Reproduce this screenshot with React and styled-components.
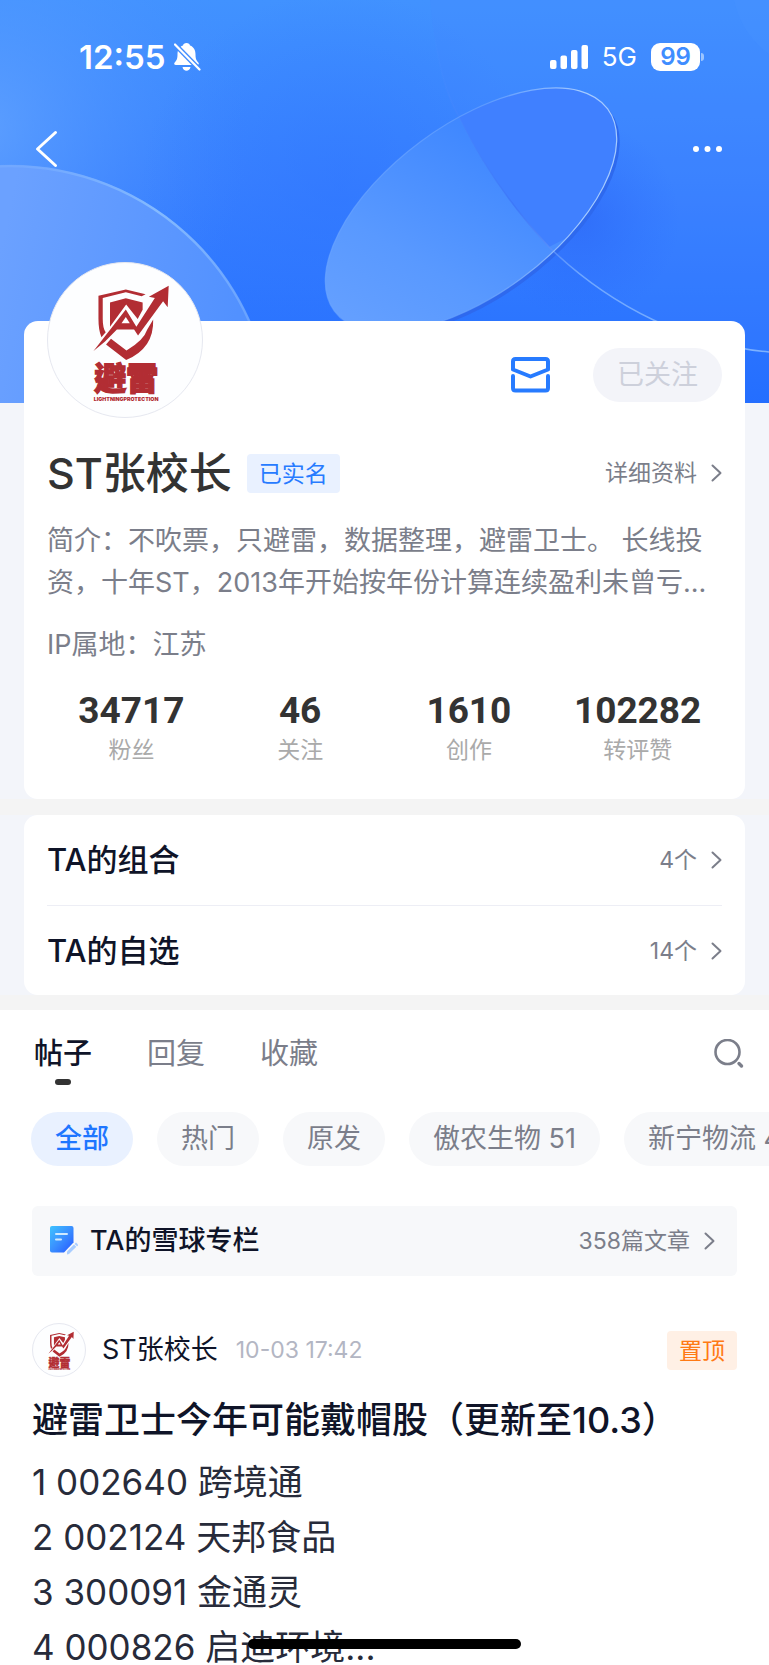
import React from "react";
import styled, { createGlobalStyle } from "styled-components";

const GlobalStyle = createGlobalStyle`
  * { box-sizing: border-box; }
  html, body { margin: 0; background: #f3f5fa; }
  body, button {
    font-family: Inter, "Noto Sans CJK SC", sans-serif;
    font-weight: 400;
  }
  h1, h2, h3, p, ul, ol, dl, dd, dt { margin: 0; padding: 0; }
  ul, ol { list-style: none; }
  button { border: 0; background: none; padding: 0; cursor: pointer; color: inherit; }
  a { color: inherit; text-decoration: none; }
  svg { display: block; flex: none; }
`;

const Shell = styled.div`
  position: relative;
  height: 100vh;
  overflow: hidden;
`;

const Scroller = styled.main`
  height: 100%;
  overflow-y: auto;
  scrollbar-width: none;
`;

const Hero = styled.header`
  position: relative;
  height: 403px;
  padding-top: 32px;
  color: #fff;
`;

const HeroArt = styled.svg`
  position: absolute;
  inset: 0;
  width: 100%;
  height: 100%;
`;

const StatusBar = styled.div`
  position: relative;
  display: flex;
  justify-content: space-between;
  align-items: center;
  height: 50px;
  padding: 0 65px 0 79px;
`;

const StatusGroup = styled.div`
  display: flex;
  align-items: center;
  gap: ${(p) => p.$gap}px;
`;

const Clock = styled.span`
  font-size: 33px;
  font-weight: 600;
  line-height: 50px;
`;

const Network = styled.span`
  font-size: 26px;
  line-height: 50px;
`;

const Battery = styled.span`
  display: flex;
  align-items: center;
  gap: 1px;
`;

const BatteryLevel = styled.span`
  width: 49px;
  height: 28px;
  border-radius: 9px;
  background: #fff;
  color: #3f8dff;
  font-size: 24px;
  font-weight: 600;
  line-height: 28px;
  text-align: center;
`;

const BatteryTip = styled.span`
  width: 3px;
  height: 8px;
  border-radius: 0 3px 3px 0;
  background: #9cc5ff;
`;

const NavBar = styled.nav`
  position: relative;
  display: flex;
  justify-content: space-between;
  align-items: center;
  height: 60px;
  margin-top: 37px;
  padding: 0 46px 0 34px;
`;

const CardArea = styled.div`
  padding: 0 24px;
  margin-top: ${(p) => (p.$overlap ? "-82px" : "0")};
  position: relative;
`;

const Card = styled.section`
  background: #fff;
  border-radius: 14px;
  padding: 0 23px;
`;

const Band = styled.div`
  height: ${(p) => p.$size}px;
  background: #f4f4f4;
`;

const ProfileTop = styled.div`
  display: flex;
  align-items: center;
  gap: 43px;
  height: 108px;
`;

const Avatar = styled.span`
  flex: none;
  width: ${(p) => p.$size}px;
  height: ${(p) => p.$size}px;
  border: 1px solid #e6e8f0;
  border-radius: 50%;
  overflow: hidden;
  background: #fdfeff;
  svg { width: 100%; height: 100%; }
`;

const AvatarSlot = styled.div`
  align-self: flex-end;
  margin: 0 auto 11px 0;
`;

const FollowButton = styled.button`
  width: 129px;
  height: 54px;
  border-radius: 27px;
  background: #f3f4f9;
  color: #cdd0db;
  font-size: 27px;
  line-height: 54px;
`;

const NameRow = styled.div`
  display: flex;
  align-items: center;
  height: 60px;
  margin-top: 14px;
`;

const Name = styled.h1`
  font-size: 43px;
  font-weight: 500;
  line-height: 60px;
  color: #333;
`;

const Tag = styled.span`
  height: 39px;
  padding: 0 12px;
  border-radius: 4px;
  font-size: 23px;
  line-height: 40px;
  background: ${(p) => (p.$tone === "orange" ? "#fff0e5" : "#e9f1ff")};
  color: ${(p) => (p.$tone === "orange" ? "#ff7a14" : "#277bff")};
`;

const NameTag = styled(Tag)`
  margin-left: 15px;
`;

const MoreLink = styled.a`
  display: flex;
  align-items: center;
  gap: 14px;
  margin-left: auto;
  font-size: 23px;
  line-height: 40px;
  color: #7b7e8a;
`;

const Bio = styled.p`
  margin-top: 17px;
  font-size: 27px;
  line-height: 42px;
  color: #7b7e8a;
`;

const Region = styled.p`
  margin-top: 20px;
  font-size: 27px;
  line-height: 42px;
  color: #7b7e8a;
`;

const Stats = styled.dl`
  display: grid;
  grid-template-columns: repeat(4, 1fr);
  padding: 24px 0 30px;
  text-align: center;
`;

const Stat = styled.div`
  display: flex;
  flex-direction: column-reverse;
`;

const StatValue = styled.dd`
  font-family: Roboto, sans-serif;
  font-size: 37px;
  font-weight: 700;
  line-height: 42px;
  color: #333;
`;

const StatLabel = styled.dt`
  font-size: 23px;
  line-height: 37px;
  color: #aaa;
`;

const ListRow = styled.li`
  display: flex;
  align-items: center;
  height: 90px;
  & + & { border-top: 1px solid #edeef5; }
`;

const RowTitle = styled.h2`
  font-size: 31px;
  font-weight: 500;
  line-height: 40px;
  color: #0f1428;
`;

const Feed = styled.section`
  background: #fff;
`;

const TabBar = styled.div`
  display: flex;
  align-items: center;
  height: 88px;
  padding: 0 25px 0 34px;
  gap: 55px;
`;

const Tab = styled.button`
  position: relative;
  height: 88px;
  font-size: 29px;
  line-height: 88px;
  font-weight: ${(p) => (p.$active ? 500 : 400)};
  color: ${(p) => (p.$active ? "#0f1428" : "#7b7e8a")};
  &::after {
    content: "";
    display: ${(p) => (p.$active ? "block" : "none")};
    position: absolute;
    bottom: 13px;
    left: calc(50% - 8px);
    width: 16px;
    height: 6px;
    border-radius: 3px;
    background: #333;
  }
`;

const SearchButton = styled.button`
  margin-left: auto;
`;

const Chips = styled.div`
  display: flex;
  gap: 24px;
  margin-top: 14px;
  padding-left: 31px;
  overflow: hidden;
`;

const Chip = styled.button`
  flex: none;
  height: 54px;
  padding: 0 24px;
  border-radius: 27px;
  font-size: 27px;
  line-height: 54px;
  font-weight: ${(p) => (p.$active ? 500 : 400)};
  background: ${(p) => (p.$active ? "#e9f1ff" : "#f7f8fa")};
  color: ${(p) => (p.$active ? "#1f76ff" : "#7b7e8a")};
  white-space: nowrap;
`;

const ColumnBar = styled.div`
  display: flex;
  align-items: center;
  height: 70px;
  margin: 40px 32px 0;
  padding: 0 22px 0 18px;
  border-radius: 6px;
  background: #f7f8fa;
`;

const ColumnTitle = styled.h2`
  margin-left: 12px;
  font-size: 27px;
  font-weight: 500;
  line-height: 40px;
  color: #0f1428;
`;

const Post = styled.article`
  padding: 47px 32px 0;
`;

const PostHead = styled.div`
  display: flex;
  align-items: center;
  height: 54px;
`;

const Author = styled.span`
  margin-left: 16px;
  font-size: 27px;
  line-height: 54px;
  color: #0f1428;
`;

const PostTime = styled.time`
  margin: 0 auto 0 18px;
  font-size: 23px;
  line-height: 54px;
  color: #b3b6c3;
`;

const PostTitle = styled.h3`
  margin-top: 18px;
  font-size: 36px;
  font-weight: 500;
  line-height: 50px;
  color: #0f1428;
`;

const PostLine = styled.p`
  font-size: 35px;
  line-height: 55px;
  color: #272b3a;
`;

const PostBody = styled.div`
  margin-top: 10px;
`;

const HomeIndicator = styled.div`
  position: absolute;
  bottom: 16px;
  left: 50%;
  width: 273px;
  height: 10px;
  margin-left: -137px;
  border-radius: 5px;
  background: #000;
`;

const HeroBackground = () => (
  <HeroArt viewBox="0 0 769 403" preserveAspectRatio="none" aria-hidden="true">
    <defs>
      <linearGradient id="sky" x1="0" y1="0" x2="0" y2="1">
        <stop offset="0" stopColor="#4192ff" />
        <stop offset="0.45" stopColor="#3981ff" />
        <stop offset="1" stopColor="#246eff" />
      </linearGradient>
      <radialGradient id="glow" gradientUnits="userSpaceOnUse" cx="-20" cy="130" r="270">
        <stop offset="0" stopColor="#6aa9ff" stopOpacity="0.7" />
        <stop offset="1" stopColor="#4a90ff" stopOpacity="0" />
      </radialGradient>
      <radialGradient id="deep" gradientUnits="userSpaceOnUse" cx="340" cy="190" r="200">
        <stop offset="0" stopColor="#2c72ff" stopOpacity="0.45" />
        <stop offset="1" stopColor="#2c72ff" stopOpacity="0" />
      </radialGradient>
      <linearGradient id="disc" gradientUnits="userSpaceOnUse" x1="0" y1="250" x2="240" y2="300">
        <stop offset="0" stopColor="#6ba1ff" />
        <stop offset="1" stopColor="#5291ff" />
      </linearGradient>
      <linearGradient id="rim" gradientUnits="userSpaceOnUse" x1="20" y1="165" x2="250" y2="320">
        <stop offset="0" stopColor="#7fb4ff" stopOpacity="0.4" />
        <stop offset="0.5" stopColor="#84baff" />
        <stop offset="1" stopColor="#7fb4ff" stopOpacity="0.5" />
      </linearGradient>
      <linearGradient id="lens" gradientUnits="userSpaceOnUse" x1="325" y1="290" x2="540" y2="200">
        <stop offset="0" stopColor="#65a0ff" />
        <stop offset="0.4" stopColor="#5999ff" />
        <stop offset="1" stopColor="#4088ff" />
      </linearGradient>
      <linearGradient id="lensEdge" gradientUnits="userSpaceOnUse" x1="380" y1="120" x2="570" y2="260">
        <stop offset="0" stopColor="#6fa8ff" stopOpacity="0.6" />
        <stop offset="0.6" stopColor="#6fa8ff" stopOpacity="0.6" />
        <stop offset="1" stopColor="#a4caff" />
      </linearGradient>
      <linearGradient id="arc" gradientUnits="userSpaceOnUse" x1="432" y1="20" x2="769" y2="352">
        <stop offset="0" stopColor="#5b9aff" stopOpacity="0" />
        <stop offset="0.4" stopColor="#3a70f5" stopOpacity="0.6" />
        <stop offset="0.6" stopColor="#6ea6ff" />
        <stop offset="1" stopColor="#7db2ff" />
      </linearGradient>
      <radialGradient id="shade" gradientUnits="userSpaceOnUse" cx="580" cy="220" r="100">
        <stop offset="0" stopColor="#2a62f5" stopOpacity="0.55" />
        <stop offset="1" stopColor="#2a6aff" stopOpacity="0" />
      </radialGradient>
      <clipPath id="lensClip">
        <ellipse cx="471" cy="210" rx="170" ry="85" transform="rotate(-36.5 471 210)" />
      </clipPath>
    </defs>
    <rect width="769" height="403" fill="url(#sky)" />
    <rect width="769" height="403" fill="url(#glow)" />
    <rect width="769" height="403" fill="url(#deep)" />
    <path d="M432 20C440 75 448 98 459 117C482 164 512 207 549 247C612 308 690 345 769 352V0H430Z" fill="#4787ff" opacity="0.2" />
    <path d="M734 0C740 25 752 42 769 54V0Z" fill="#4f9bff" opacity="0.15" />
    <rect x="450" y="90" width="319" height="313" fill="url(#shade)" />
    <circle cx="10" cy="428" r="263" fill="url(#disc)" />
    <circle cx="10" cy="428" r="262" fill="none" stroke="url(#rim)" strokeWidth="2.5" />
    <ellipse cx="474" cy="213" rx="170" ry="85" transform="rotate(-36.5 474 213)" fill="#2e69ee" />
    <ellipse cx="471" cy="210" rx="170" ry="85" transform="rotate(-36.5 471 210)" fill="url(#lens)" />
    <path d="M425 0C438 60 446 95 459 117C482 164 512 207 549 247L640 200V0Z" fill="#4080ff" clipPath="url(#lensClip)" />
    <path d="M432 20C440 75 448 98 459 117C482 164 512 207 549 247C612 308 690 345 769 352" fill="none" stroke="url(#arc)" strokeWidth="1.5" />
    <ellipse cx="471" cy="210" rx="170" ry="85" transform="rotate(-36.5 471 210)" fill="none" stroke="url(#lensEdge)" strokeWidth="1.2" />
  </HeroArt>
);

const Logo = () => (
  <svg viewBox="52 36 467 467" role="img" aria-label="避雷">
    <g fill="#b22d33">
      <path d="M205 135L288 116L348 131L336 137L288 125L218 142V205Q218 234 227 246L214 261Q205 240 205 205Z" />
      <path d="M240 156L288 143L339 156V178L324 206L289 162L240 229Z" />
      <path d="M190 303L288 177L320 229L376 142L358 138L418 105L415 170L401 152L325 256L313 238H261L225 274Z" />
      <path d="M228 283L243 266L290 301Q342 272 353 238L371 207Q374 294 289 330Z" />
    </g>
    <path d="M288 200L300 219H275Z" fill="#fff" />
    <text x="289" y="421" textAnchor="middle" fontFamily="'Noto Sans CJK TC', sans-serif" fontWeight="900" fontSize="97" fill="#b22d33" stroke="#b22d33" strokeWidth="4">避雷</text>
    <text x="289" y="453" textAnchor="middle" fontFamily="Inter, sans-serif" fontWeight="900" fontSize="16" fill="#b22d33">LIGHTNINGPROTECTION</text>
  </svg>
);

const BellOff = () => (
  <svg width="27" height="28" viewBox="0 0 27 28" aria-hidden="true">
    <path d="M12.5 0C14.5 0 15.8 1.2 16 2.6C20 4 21.5 7.5 21.5 11.5C21.5 16 22.5 17.5 24.3 19.5C25.3 20.8 24.8 22 23.3 22H1.7C.2 22-.3 20.8.7 19.5C2.5 17.5 3.5 16 3.5 11.5C3.5 7.5 5 4 9 2.6C9.2 1.2 10.5 0 12.5 0ZM8.5 24H16.5C16 26.5 14.5 27.8 12.5 27.8S9 26.5 8.5 24Z" fill="#fff" />
    <path d="M1 1.5L25.5 26.5" stroke="#448fff" strokeWidth="5" />
    <path d="M1 1.5L25.5 26.5" stroke="#fff" strokeWidth="2.2" strokeLinecap="round" />
  </svg>
);

const Signal = () => (
  <svg width="38" height="24" viewBox="0 0 38 24" fill="#fff" aria-hidden="true">
    <rect x="0" y="15" width="6.5" height="9" rx="2" />
    <rect x="10.5" y="10.5" width="6.5" height="13.5" rx="2" />
    <rect x="21" y="5" width="6.5" height="19" rx="2" />
    <rect x="31.5" y="0" width="6.5" height="24" rx="2" />
  </svg>
);

const BackIcon = () => (
  <svg width="24" height="38" viewBox="0 0 24 38" fill="none" stroke="#fff" strokeWidth="3" strokeLinecap="round" strokeLinejoin="round">
    <path d="M21.5 2.5L3.5 19L21.5 35.5" />
  </svg>
);

const DotsIcon = () => (
  <svg width="31" height="8" viewBox="0 0 31 8" fill="#fff">
    <circle cx="4" cy="4" r="3" />
    <circle cx="15.5" cy="4" r="3" />
    <circle cx="27" cy="4" r="3" />
  </svg>
);

const MailIcon = () => (
  <svg width="39" height="36" viewBox="0 0 39 36" fill="none" stroke="#277bff" strokeWidth="4" strokeLinecap="round" strokeLinejoin="round">
    <path d="M2 12.5V4.5Q2 2 4.5 2H34.5Q37 2 37 4.5V12.5L19.5 19.5Z" />
    <path d="M2 19V31Q2 33.5 4.5 33.5H34.5Q37 33.5 37 31V19" />
  </svg>
);

const Chevron = () => (
  <svg width="11" height="18" viewBox="0 0 11 18" fill="none" stroke="#7b7e8a" strokeWidth="2" strokeLinecap="round" strokeLinejoin="round" aria-hidden="true">
    <path d="M1.5 1.5L9.5 9L1.5 16.5" />
  </svg>
);

const SearchIcon = () => (
  <svg width="30" height="30" viewBox="0 0 30 30" fill="none" stroke="#7b7e8a">
    <circle cx="13.5" cy="13" r="12" strokeWidth="2.6" />
    <path d="M25 24.5L27.5 27" strokeWidth="3.4" strokeLinecap="round" />
  </svg>
);

const ArticleIcon = () => (
  <svg width="28" height="30" viewBox="0 0 28 30" aria-hidden="true">
    <defs>
      <linearGradient id="page" x1="0" y1="0" x2="1" y2="1">
        <stop offset="0" stopColor="#3ec3ff" />
        <stop offset="0.5" stopColor="#3a8fff" />
        <stop offset="1" stopColor="#2456ff" />
      </linearGradient>
    </defs>
    <path d="M2 0H21.5Q23.5 0 23.5 2V16.5L14 26.5H2Q0 26.5 0 24.5V2Q0 0 2 0Z" fill="url(#page)" />
    <path d="M6 8H17M6 13.5H11" stroke="#cfeaff" strokeWidth="2" strokeLinecap="round" />
    <path d="M17 28.5V25.5L24 18.5L26.3 20.8L19 28Z" fill="#a9cdff" />
    <path d="M25.3 17.2L27.8 19.6" stroke="#a9cdff" strokeWidth="2" />
  </svg>
);

const stats = [
  ["粉丝", "34717"],
  ["关注", "46"],
  ["创作", "1610"],
  ["转评赞", "102282"],
];

const collections = [
  ["TA的组合", "4个"],
  ["TA的自选", "14个"],
];

const tabs = ["帖子", "回复", "收藏"];
const filters = ["全部", "热门", "原发", "傲农生物 51", "新宁物流 4"];
const stocks = ["1 002640 跨境通", "2 002124 天邦食品", "3 300091 金通灵", "4 000826 启迪环境..."];

export default function App() {
  return (
    <Shell>
      <GlobalStyle />
      <Scroller>
        <Hero>
          <HeroBackground />
          <StatusBar>
            <StatusGroup $gap={8}>
              <Clock>12:55</Clock>
              <BellOff />
            </StatusGroup>
            <StatusGroup $gap={14}>
              <Signal />
              <Network>5G</Network>
              <Battery>
                <BatteryLevel>99</BatteryLevel>
                <BatteryTip />
              </Battery>
            </StatusGroup>
          </StatusBar>
          <NavBar>
            <button type="button" aria-label="返回"><BackIcon /></button>
            <button type="button" aria-label="更多"><DotsIcon /></button>
          </NavBar>
        </Hero>

        <CardArea $overlap>
          <Card>
            <ProfileTop>
              <AvatarSlot>
                <Avatar as="div" $size={156}><Logo /></Avatar>
              </AvatarSlot>
              <button type="button" aria-label="私信"><MailIcon /></button>
              <FollowButton type="button">已关注</FollowButton>
            </ProfileTop>
            <NameRow>
              <Name>ST张校长</Name>
              <NameTag>已实名</NameTag>
              <MoreLink href="#profile">详细资料<Chevron /></MoreLink>
            </NameRow>
            <Bio>简介：不吹票，只避雷，数据整理，避雷卫士。 长线投资，十年ST，2013年开始按年份计算连续盈利未曾亏...</Bio>
            <Region>IP属地：江苏</Region>
            <Stats>
              {stats.map(([label, value]) => (
                <Stat key={label}>
                  <StatLabel>{label}</StatLabel>
                  <StatValue>{value}</StatValue>
                </Stat>
              ))}
            </Stats>
          </Card>
        </CardArea>
        <Band $size={16} />
        <CardArea>
          <Card as="ul">
            {collections.map(([title, count]) => (
              <ListRow key={title}>
                <RowTitle>{title}</RowTitle>
                <MoreLink href="#list">{count}<Chevron /></MoreLink>
              </ListRow>
            ))}
          </Card>
        </CardArea>
        <Band $size={15} />

        <Feed>
          <TabBar>
            {tabs.map((tab, i) => (
              <Tab key={tab} type="button" $active={i === 0}>{tab}</Tab>
            ))}
            <SearchButton type="button" aria-label="搜索"><SearchIcon /></SearchButton>
          </TabBar>
          <Chips>
            {filters.map((filter, i) => (
              <Chip key={filter} type="button" $active={i === 0}>{filter}</Chip>
            ))}
          </Chips>
          <ColumnBar>
            <ArticleIcon />
            <ColumnTitle>TA的雪球专栏</ColumnTitle>
            <MoreLink href="#column">358篇文章<Chevron /></MoreLink>
          </ColumnBar>
          <Post>
            <PostHead>
              <Avatar $size={54}><Logo /></Avatar>
              <Author>ST张校长</Author>
              <PostTime>10-03 17:42</PostTime>
              <Tag $tone="orange">置顶</Tag>
            </PostHead>
            <PostTitle>避雷卫士今年可能戴帽股（更新至10.3）</PostTitle>
            <PostBody>
              {stocks.map((line) => (
                <PostLine key={line}>{line}</PostLine>
              ))}
            </PostBody>
          </Post>
        </Feed>
      </Scroller>
      <HomeIndicator />
    </Shell>
  );
}
